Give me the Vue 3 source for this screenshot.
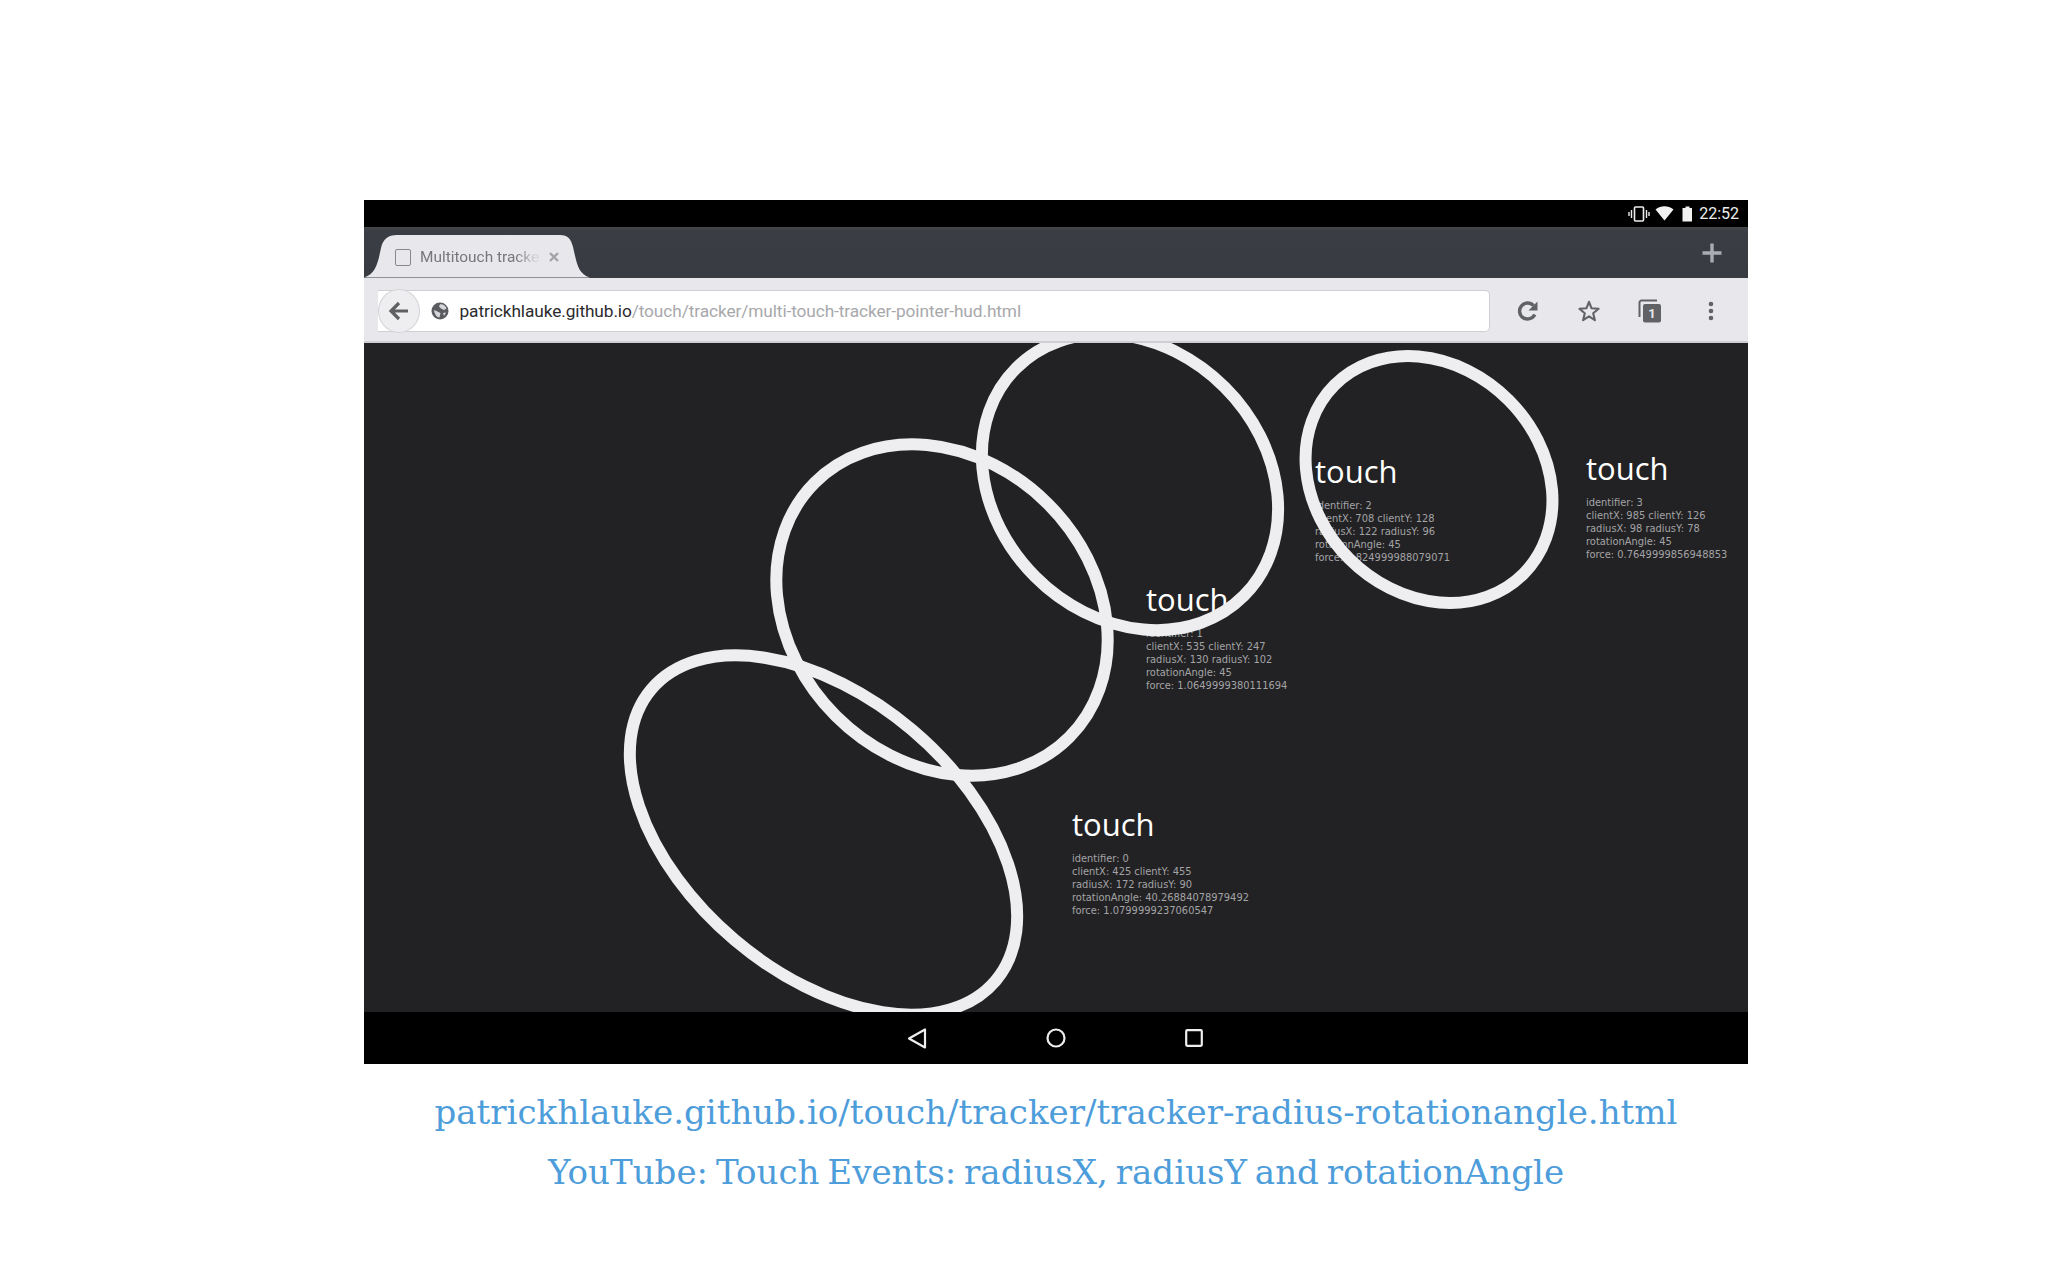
<script setup>
const rings = [
  { cx: 459.5, cy: 492, a: 225.5, b: 137.5, r: 40.27 },
  { cx: 578, cy: 267, a: 180, b: 150, r: 45 },
  { cx: 766, cy: 139, a: 161, b: 134, r: 45 },
  { cx: 1065, cy: 136.5, a: 133.5, b: 112.5, r: 45 }
]
const labels = [
  { x: 708, y: 463, lines: ['identifier: 0', 'clientX: 425 clientY: 455', 'radiusX: 172 radiusY: 90', 'rotationAngle: 40.26884078979492', 'force: 1.0799999237060547'] },
  { x: 782, y: 238, lines: ['identifier: 1', 'clientX: 535 clientY: 247', 'radiusX: 130 radiusY: 102', 'rotationAngle: 45', 'force: 1.0649999380111694'] },
  { x: 951, y: 110, lines: ['identifier: 2', 'clientX: 708 clientY: 128', 'radiusX: 122 radiusY: 96', 'rotationAngle: 45', 'force: 0.824999988079071'] },
  { x: 1222, y: 107, lines: ['identifier: 3', 'clientX: 985 clientY: 126', 'radiusX: 98 radiusY: 78', 'rotationAngle: 45', 'force: 0.7649999856948853'] }
]
</script>

<template>
  <div class="page">
    <div class="frame">
      <div class="status">
        <svg class="st-vib" width="22" height="16" viewBox="0 0 22 16">
          <rect x="6.5" y="1" width="9" height="14" rx="1" fill="none" stroke="#eee" stroke-width="1.6" />
          <path d="M3.5 4v8M1 6v4M18.5 4v8M21 6v4" stroke="#eee" stroke-width="1.4" fill="none" />
        </svg>
        <svg class="st-wifi" width="19" height="15" viewBox="0 0 19 15">
          <path d="M0.5 3.5C6 -0.8 13 -0.8 18.5 3.5L9.5 14.5Z" fill="#f2f2f2" />
        </svg>
        <svg class="st-bat" width="11" height="16" viewBox="0 0 11 16">
          <path d="M3.5 0.5h4v1.5h2.5v13.5h-9.5v-13.5h3Z" fill="#f2f2f2" />
        </svg>
        <span class="time">22:52</span>
      </div>
      <div class="tabstrip">
        <div class="tab">
          <svg class="tab-shape" width="226" height="44" viewBox="0 0 226 44">
            <path d="M0 43.5C12 40 14 28 17 14C19 5 24 1 33 1H196C204 1 207 5 209 13C213 30 214 40 226 43.5Z" fill="#e8e8ec" />
          </svg>
          <span class="favicon"></span>
          <span class="tab-title">Multitouch tracke</span>
          <svg class="tab-close" width="12" height="12" viewBox="0 0 12 12">
            <path d="M2 2L10 10M10 2L2 10" stroke="#a4a4a8" stroke-width="2.4" />
          </svg>
        </div>
        <svg class="plus" width="20" height="20" viewBox="0 0 20 20">
          <path d="M10 0.5V19.5M0.5 10H19.5" stroke="#a9adb1" stroke-width="3.4" />
        </svg>
      </div>
      <div class="toolbar">
        <div class="omnibox">
          <div class="back">
            <svg width="22" height="20" viewBox="0 0 22 20">
              <path d="M20 10H3.5M11 2L3 10L11 18" fill="none" stroke="#5f6062" stroke-width="3.2" />
            </svg>
          </div>
          <svg class="globe" width="18" height="18" viewBox="0 0 18 18">
            <circle cx="9" cy="9" r="8.5" fill="#5a5c60" />
            <path d="M9 2.2C12 1.8 15 4 15.6 6.5L13 8L10 6.5L8 4.5ZM3 8L6.5 9.5L9.5 11L8.5 15.5C6 15.5 3.5 12.5 3 8ZM12 11L15 10.5L13 14Z" fill="#d6d6da" />
          </svg>
          <span class="url"><span class="host">patrickhlauke.github.io</span><span class="path">/touch/tracker/multi-touch-tracker-pointer-hud.html</span></span>
        </div>
        <div class="tools">
          <svg width="24" height="24" viewBox="0 0 24 24">
            <path d="M18.8 15.5A8 8 0 1 1 17.5 6.6" fill="none" stroke="#616265" stroke-width="3.4" />
            <path d="M21.5 2.5V11.5H12.5Z" fill="#616265" />
          </svg>
          <svg width="24" height="24" viewBox="0 0 24 24">
            <path d="M12 2.8L14.6 9.3L21.6 9.8L16.2 14.3L17.9 21.2L12 17.4L6.1 21.2L7.8 14.3L2.4 9.8L9.4 9.3Z" fill="none" stroke="#616265" stroke-width="2.1" stroke-linejoin="round" />
          </svg>
          <div class="tabs-ico">
            <svg width="24" height="24" viewBox="0 0 24 24">
              <path d="M19 1.5H3.5A2 2 0 0 0 1.5 3.5V18" fill="none" stroke="#616265" stroke-width="2" />
              <rect x="5" y="5" width="18" height="18.5" rx="2" fill="#616265" />
            </svg>
            <span class="tabs-num">1</span>
          </div>
          <svg width="24" height="24" viewBox="0 0 24 24">
            <circle cx="12" cy="5" r="2.3" fill="#616265" />
            <circle cx="12" cy="12" r="2.3" fill="#616265" />
            <circle cx="12" cy="19" r="2.3" fill="#616265" />
          </svg>
        </div>
      </div>
      <div class="canvas">
        <div v-for="l in labels" :key="l.x" class="label" :style="{ left: l.x + 'px', top: l.y + 'px' }">
          <div class="touch">touch</div>
          <div class="detail">
            <div v-for="t in l.lines" :key="t">{{ t }}</div>
          </div>
        </div>
        <svg class="rings" width="1384" height="669" viewBox="0 0 1384 669">
          <ellipse
            v-for="r in rings"
            :key="r.cx"
            :cx="r.cx"
            :cy="r.cy"
            :rx="r.a"
            :ry="r.b"
            :transform="`rotate(${r.r} ${r.cx} ${r.cy})`"
            fill="none"
            stroke="#eeeef0"
            stroke-width="12"
          />
        </svg>
      </div>
      <div class="navbar">
        <svg width="20" height="21" viewBox="0 0 20 21">
          <path d="M18 1.5V19.5L2 10.5Z" fill="none" stroke="#eee" stroke-width="2.2" stroke-linejoin="round" />
        </svg>
        <svg width="20" height="20" viewBox="0 0 20 20">
          <circle cx="10" cy="10" r="8.5" fill="none" stroke="#eee" stroke-width="2.2" />
        </svg>
        <svg width="18" height="18" viewBox="0 0 18 18">
          <rect x="1.2" y="1.2" width="15.6" height="15.6" rx="1" fill="none" stroke="#eee" stroke-width="2.2" />
        </svg>
      </div>
      <div class="caption">
        <div>patrickhlauke.github.io/touch/tracker/tracker-radius-rotationangle.html</div>
        <div class="caption-second">YouTube: Touch Events: radiusX, radiusY and rotationAngle</div>
      </div>
    </div>
  </div>
</template>

<style>
html, body { margin: 0; background: #fff; }
</style>

<style scoped>
.page {
  width: 2048px;
  height: 1280px;
  background: #fff;
  overflow: hidden;
  padding: 200px 0 0 364px;
  box-sizing: border-box;
}
.frame { width: 1384px; font-family: Roboto, "Liberation Sans", sans-serif; }
.status {
  height: 27px;
  background: #000;
  display: flex;
  align-items: center;
  justify-content: flex-end;
  padding-right: 9px;
  box-sizing: border-box;
}
.st-wifi { margin-left: 5px; }
.st-bat { margin-left: 8px; }
.time { margin-left: 6px; color: #eee; font-size: 16px; }
.tabstrip {
  height: 51px;
  background: linear-gradient(#45474a 0, #3a3d43 4px, #383b42 100%);
  display: flex;
  align-items: flex-end;
  justify-content: space-between;
  padding-right: 26px;
  box-sizing: border-box;
  position: relative;
}
.tab {
  position: relative;
  width: 226px;
  height: 44px;
  display: flex;
  align-items: center;
  padding: 2px 0 0 31px;
  box-sizing: border-box;
}
.tab-shape { position: absolute; left: 0; top: 0; }
.favicon {
  position: relative;
  flex: none;
  width: 16px;
  height: 17px;
  box-sizing: border-box;
  border: 1.5px solid #88888c;
  border-radius: 2px;
}
.tab-title {
  position: relative;
  flex: none;
  margin-left: 9px;
  width: 120px;
  white-space: nowrap;
  color: #77777b;
  font-size: 15.4px;
  -webkit-mask-image: linear-gradient(90deg, #000 80%, rgba(0,0,0,0.15) 96%);
  mask-image: linear-gradient(90deg, #000 80%, rgba(0,0,0,0.15) 96%);
}
.tab-close { position: relative; flex: none; margin-left: 8px; }
.plus { margin-bottom: 15px; }
.toolbar {
  height: 65px;
  background: #e8e8ec;
  border-bottom: 2px solid #cfcfd2;
  box-sizing: border-box;
  display: flex;
  align-items: center;
  padding: 0 0 0 14px;
}
.omnibox {
  width: 1112px;
  height: 42px;
  margin-top: 3px;
  background: #fff;
  border: 1px solid #cfcfd3;
  border-left: 0;
  border-radius: 0 5px 5px 0;
  display: flex;
  align-items: center;
  position: relative;
  box-sizing: border-box;
}
.back {
  width: 42px;
  height: 44px;
  flex: none;
  border-radius: 50%;
  background: #eeeef1;
  border: 1px solid #d4d4d8;
  box-sizing: border-box;
  display: flex;
  align-items: center;
  justify-content: center;
}
.globe { margin-left: 11px; flex: none; }
.url { margin-left: 10.5px; font-size: 17.3px; white-space: nowrap; letter-spacing: -0.1px; }
.host { color: #2b2b2d; }
.path { color: #a8a8ac; }
.tools {
  width: 258px;
  display: flex;
  justify-content: flex-start;
  gap: 37px;
  padding-left: 26px;
  margin-top: 3px;
  box-sizing: border-box;
  align-items: center;
}
.tabs-ico { position: relative; width: 24px; height: 24px; }
.tabs-num {
  position: absolute;
  left: 5px;
  top: 5px;
  width: 18px;
  line-height: 19px;
  text-align: center;
  color: #e8e8ec;
  font-size: 13px;
  font-weight: 700;
}
.canvas {
  position: relative;
  height: 669px;
  background: #222224;
  overflow: hidden;
}
.rings { position: absolute; left: 0; top: 0; }
.label { position: absolute; }
.touch {
  font-family: "Open Sans", sans-serif;
  font-size: 31px;
  line-height: 36px;
  color: #fff;
}
.detail {
  margin-top: 10px;
  font-family: "DejaVu Sans", sans-serif;
  font-size: 9.9px;
  line-height: 13px;
  color: #a4a4a6;
  white-space: nowrap;
}
.navbar {
  height: 52px;
  background: #000;
  display: flex;
  align-items: center;
  justify-content: center;
  gap: 119px;
  padding-right: 2px;
  box-sizing: border-box;
}
.caption {
  margin-top: 18px;
  text-align: center;
  font-family: "DejaVu Serif", "Liberation Serif", serif;
  font-size: 34.1px;
  line-height: 60px;
  color: #4d9ddb;
  white-space: nowrap;
}
.caption-second { word-spacing: -3px; }
</style>
